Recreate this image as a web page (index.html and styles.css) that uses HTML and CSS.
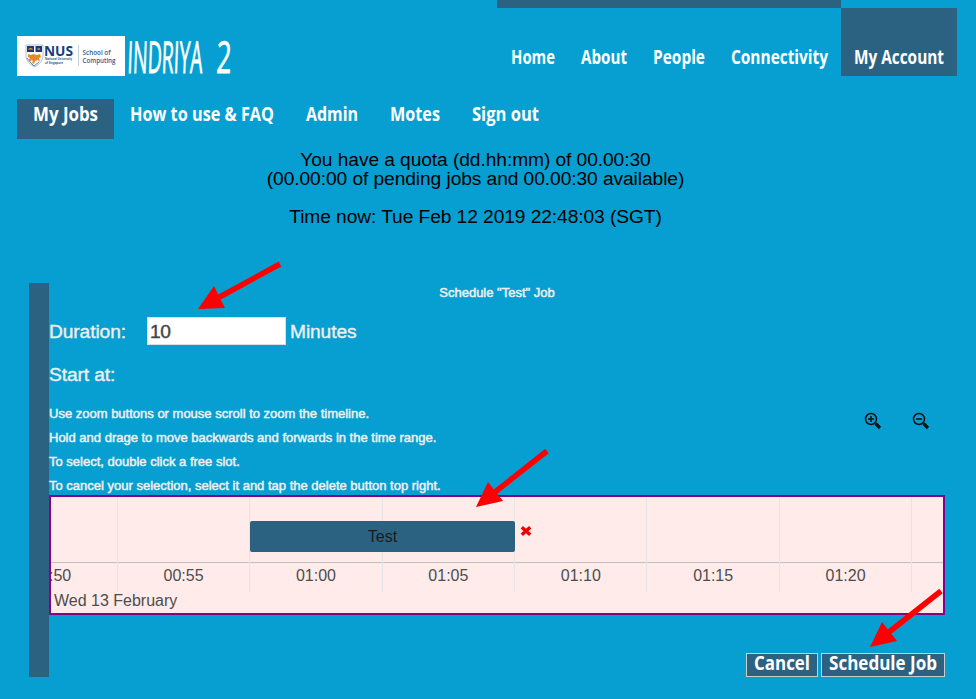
FILE: index.html
```html
<!DOCTYPE html>
<html lang="en">
<head>
<meta charset="utf-8">
<title>Indriya 2</title>
<link rel="stylesheet" href="styles.css">
</head>
<body>
<header class="header">
  <div class="brand">
    <svg class="logo" width="108" height="40" viewBox="0 0 108 40">
      <rect width="108" height="40" fill="#fff"/>
      <path d="M9 9h17v12q-1 6-8.500 10Q10 27 9 21z" fill="#fff" stroke="#91a4ba" stroke-width=".7"/>
      <path d="M10 10h7v6h-7zM18.500 10h6.500v6h-6.500z" fill="#173e7c"/>
      <path d="M11.500 13.500l2-1 2 1M20.500 13h2.500" fill="none" stroke="#ef8f28" stroke-width="1.300"/>
      <path d="M11 18l3 1 2-1 4 1 3-1 1 3-2 1 1 4-2-2-3 1-1 3-2-1 1-2-2-1-1 2-1-2 1-2-2-1z" fill="#e8862b"/>
      <path d="M10 22l4 5 3 3 5-4" fill="none" stroke="#294f87" stroke-width=".7"/>
      <text x="27" y="20" textLength="29" lengthAdjust="spacingAndGlyphs" class="nus">NUS</text>
      <text x="28" y="24" textLength="27" lengthAdjust="spacingAndGlyphs" class="uni">National University</text>
      <text x="28" y="28" textLength="18" lengthAdjust="spacingAndGlyphs" class="uni">of Singapore</text>
      <path d="M61.500 9v21" stroke="#b8c5d5" stroke-width=".8"/>
      <text x="65.500" y="18.500" textLength="28" lengthAdjust="spacingAndGlyphs" class="school">School of</text>
      <text x="65.500" y="26.500" textLength="33" lengthAdjust="spacingAndGlyphs" class="school">Computing</text>
    </svg>
    <svg class="wordmark" width="108" height="40" viewBox="0 0 108 40"><text transform="translate(2 37) skewX(-2)"><tspan textLength="75" lengthAdjust="spacingAndGlyphs">INDRIYA</tspan> <tspan x="89" textLength="15" lengthAdjust="spacingAndGlyphs">2</tspan></text></svg>
  </div>
  <nav class="main-nav">
    <a><svg width="44" height="28"><text y="20" textLength="44" lengthAdjust="spacingAndGlyphs">Home</text></svg></a>
    <a><svg width="46" height="28"><text y="20" textLength="46" lengthAdjust="spacingAndGlyphs">About</text></svg></a>
    <a><svg width="52" height="28"><text y="20" textLength="52" lengthAdjust="spacingAndGlyphs">People</text></svg></a>
    <a><svg width="97" height="28"><text y="20" textLength="97" lengthAdjust="spacingAndGlyphs">Connectivity</text></svg></a>
    <a class="active"><svg width="90" height="28"><text y="20" textLength="90" lengthAdjust="spacingAndGlyphs">My Account</text></svg></a>
  </nav>
</header>
<nav class="sub-nav">
  <a class="active"><svg width="65" height="28"><text y="20" textLength="65" lengthAdjust="spacingAndGlyphs">My Jobs</text></svg></a>
  <a><svg width="144" height="28"><text y="20" textLength="144" lengthAdjust="spacingAndGlyphs">How to use &amp; FAQ</text></svg></a>
  <a><svg width="52" height="28"><text y="20" textLength="52" lengthAdjust="spacingAndGlyphs">Admin</text></svg></a>
  <a><svg width="50" height="28"><text y="20" textLength="50" lengthAdjust="spacingAndGlyphs">Motes</text></svg></a>
  <a><svg width="67" height="28"><text y="20" textLength="67" lengthAdjust="spacingAndGlyphs">Sign out</text></svg></a>
</nav>
<section class="quota">
  <p>You have a quota (dd.hh:mm) of 00.00:30<br>(00.00:00 of pending jobs and 00.00:30 available)</p>
  <p>Time now: Tue Feb 12 2019 22:48:03 (SGT)</p>
</section>
<main class="scheduler">
  <h1 class="title">Schedule "Test" Job</h1>
  <div class="duration"><label for="duration">Duration:</label><input id="duration" value="10"><span>Minutes</span></div>
  <div class="start">Start at:</div>
  <div class="help-row">
    <div class="help">
      <p>Use zoom buttons or mouse scroll to zoom the timeline.</p>
      <p>Hold and drage to move backwards and forwards in the time range.</p>
      <p>To select, double click a free slot.</p>
      <p>To cancel your selection, select it and tap the delete button top right.</p>
    </div>
    <div class="zoom">
      <svg width="18" height="18" viewBox="0 0 18 18"><circle cx="7" cy="7" r="5.500"/><path d="M4 7h6M7 4v6"/><path class="handle" d="M11.500 11.500l4.500 4.500"/></svg>
      <svg width="18" height="18" viewBox="0 0 18 18"><circle cx="7" cy="7" r="5.500"/><path d="M4 7h6"/><path class="handle" d="M11.500 11.500l4.500 4.500"/></svg>
    </div>
  </div>
  <div class="timeline">
    <div class="ticks">
      <span>00:50</span><span>00:55</span><span>01:00</span><span>01:05</span><span>01:10</span><span>01:15</span><span>01:20</span><span></span>
    </div>
    <div class="date">Wed 13 February</div>
    <div class="job">Test</div>
    <svg class="delete" width="12" height="12" viewBox="0 0 12 12"><path d="M1.800 2.200l8.400 7.600M10.200 2.200L1.800 9.800"/></svg>
  </div>
  <div class="actions">
    <button><svg width="56" height="22"><text y="16" textLength="56" lengthAdjust="spacingAndGlyphs">Cancel</text></svg></button>
    <button><svg width="108" height="22"><text y="16" textLength="108" lengthAdjust="spacingAndGlyphs">Schedule Job</text></svg></button>
  </div>
</main>
<svg class="arrows" width="976" height="699" viewBox="0 0 976 699">
  <path d="M280 264L216 299M547 451L490 496M941 591L884 636"/>
  <path class="head" d="M198 309l16-23 11 22zM476 507l12-25 15 19zM870 647l12-25 15 19z"/>
</svg>
</body>
</html>
```
FILE: styles.css
```css
* { box-sizing: border-box; }
body {
  margin: 0;
  width: 976px;
  height: 699px;
  overflow: hidden;
  background: #079fd1;
  font-family: "Liberation Sans", sans-serif;
}
svg { display: block; overflow: visible; }
p { margin: 0; }

.header { display: flex; justify-content: space-between; height: 99px; padding: 0 19px 0 17px; }
.brand { display: flex; padding-top: 36px; }
.nus { font: 700 14.5px "Open Sans", sans-serif; fill: #173e7c; }
.uni { font: 700 3px "Open Sans", sans-serif; fill: #315a90; }
.school { font: 600 7px "Open Sans", sans-serif; fill: #315a90; }
.wordmark text { font: 400 44px "Open Sans", sans-serif; fill: #fff; stroke: #fff; stroke-width: .8; }

.main-nav { display: flex; height: 76px; }
.main-nav a { height: 76px; padding: 36px 12px 0 14px; border-top: 8px solid #2c6281; }
.main-nav a:nth-child(4) { padding-right: 13px; }
.main-nav .active { padding-left: 13px; padding-right: 13px; border-top-color: #079fd1; background: #2c6281; }
.main-nav text, .sub-nav text, .actions text { font: 700 18.8px "Open Sans", sans-serif; fill: #fff; }

.sub-nav { display: flex; height: 40px; padding-left: 17px; }
.sub-nav a { height: 40px; padding: 2px 16px 0 16px; }
.sub-nav .active { background: #2c6281; }

.quota { padding: 11px 25px 0 0; font-size: 19.2px; line-height: 19px; letter-spacing: -.08px; text-align: center; }
.quota p + p { margin-top: 19px; }

.scheduler {
  width: 917px;
  height: 394px;
  margin: 57px 0 0 29px;
  border-left: 20px solid #2c6281;
  color: #eee;
}
.title { margin: 0; padding-right: 1px; font-size: 13px; font-weight: 400; line-height: 19px; letter-spacing: 0; text-align: center; -webkit-text-stroke: .5px; }
.duration { display: flex; align-items: center; height: 28px; margin-top: 15px; font-size: 19.2px; letter-spacing: -.1px; -webkit-text-stroke: .4px; }
.duration label { width: 98px; padding-top: 1px; }
.duration span { padding-top: 1px; }
.duration input { width: 139px; height: 28px; margin: 0 4px 0 0; padding: 1px 2px 0; border: 1px solid #ddd; background: #fff; color: #444; font: 19.2px "Liberation Sans", sans-serif; letter-spacing: -.4px; }
.start { height: 24px; margin-top: 18px; font-size: 19.2px; line-height: 24px; letter-spacing: -.1px; -webkit-text-stroke: .4px; }
.help-row { display: flex; justify-content: space-between; height: 96px; margin-top: 15px; }
.help { font-size: 13px; line-height: 24px; white-space: nowrap; -webkit-text-stroke: .5px; }
.zoom { display: flex; gap: 30px; padding: 10px 16px 0 0; }
.zoom svg { fill: none; stroke: #111; stroke-width: 1.5; }
.zoom .handle { stroke-width: 3.2; }

.timeline { position: relative; width: 896px; height: 120px; margin-top: -3px; overflow: hidden; border: 2px solid #808; background: #ffebea; color: #4d4d4d; font-size: 16px; }
.ticks { display: flex; height: 95px; margin-left: -65.5px; background: linear-gradient(#bfbfbf, #bfbfbf) 0 65px / 100% 1px no-repeat; }
.ticks span { flex: 0 0 132.4px; padding-top: 70px; border-right: 1px solid #e5e5e5; line-height: 18px; text-align: center; }
.date { padding-left: 3px; line-height: 18px; }
.job { position: absolute; left: 199px; top: 24px; width: 265px; height: 31px; border-radius: 2px; background: #2c6281; color: #1a1a1a; line-height: 31px; text-align: center; }
.delete { position: absolute; left: 469px; top: 28px; fill: none; stroke: #f00000; stroke-width: 3.4; }

.actions { display: flex; justify-content: flex-end; gap: 3px; width: 896px; margin-top: 38px; }
.actions button { height: 24px; padding: 0 7px; border: 1px solid #ccc; background: #2c6281; }
.arrows { position: absolute; left: 0; top: 0; fill: none; stroke: #f00; stroke-width: 5.5; pointer-events: none; }
.arrows .head { fill: #f00; stroke: none; }
```
